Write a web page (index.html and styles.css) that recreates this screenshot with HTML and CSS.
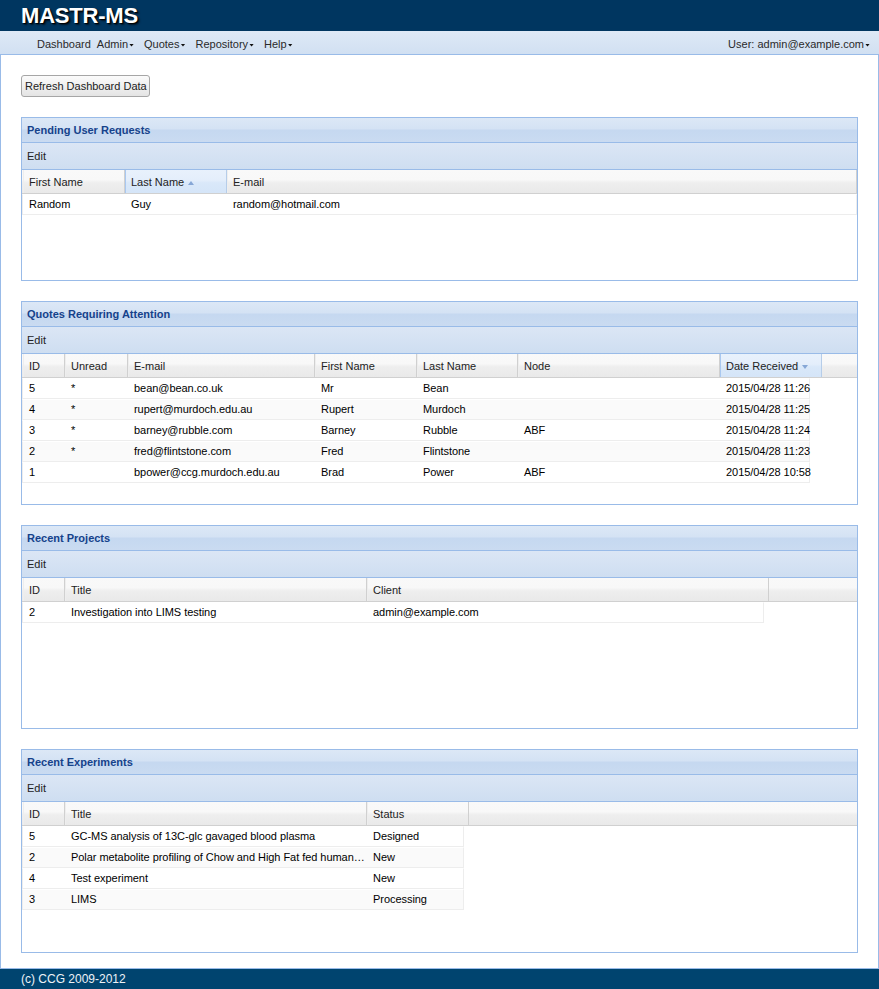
FILE: index.html
```html
<!DOCTYPE html>
<html lang="en">
<head>
<meta charset="utf-8">
<title>MASTR-MS</title>
<link rel="stylesheet" href="styles.css">
</head>
<body>
<header class="topbar"><span class="brand">MASTR-MS</span></header>
<nav class="menubar">
  <div class="menu-group">
    <span class="mi">Dashboard</span>
    <span class="mi">Admin<i class="caret"></i></span>
    <span class="mi">Quotes<i class="caret"></i></span>
    <span class="mi">Repository<i class="caret"></i></span>
    <span class="mi">Help<i class="caret"></i></span>
  </div>
  <div class="menu-group">
    <span class="mi">User: admin@example.com<i class="caret"></i></span>
  </div>
</nav>
<main class="content">
  <button class="btn" type="button">Refresh Dashboard Data</button>

  <section class="panel panel-short">
    <div class="panel-head">Pending User Requests</div>
    <div class="toolbar"><span class="tb-btn">Edit</span></div>
    <div class="grid g-pending">
      <div class="grid-head">
        <div class="hd">First Name</div>
        <div class="hd sorted">Last Name<i class="arrow-up"></i></div>
        <div class="hd">E-mail</div>
      </div>
      <div class="grid-body">
        <div class="row"><div class="cell">Random</div><div class="cell">Guy</div><div class="cell">random@hotmail.com</div></div>
      </div>
    </div>
  </section>

  <section class="panel">
    <div class="panel-head">Quotes Requiring Attention</div>
    <div class="toolbar"><span class="tb-btn">Edit</span></div>
    <div class="grid g-quotes">
      <div class="grid-head">
        <div class="hd">ID</div>
        <div class="hd">Unread</div>
        <div class="hd">E-mail</div>
        <div class="hd">First Name</div>
        <div class="hd">Last Name</div>
        <div class="hd">Node</div>
        <div class="hd sorted">Date Received<i class="arrow-down"></i></div>
        <div class="hd-fill"></div>
      </div>
      <div class="grid-body">
        <div class="row"><div class="cell">5</div><div class="cell">*</div><div class="cell">bean@bean.co.uk</div><div class="cell">Mr</div><div class="cell">Bean</div><div class="cell"></div><div class="cell">2015/04/28 11:26</div></div>
        <div class="row alt"><div class="cell">4</div><div class="cell">*</div><div class="cell">rupert@murdoch.edu.au</div><div class="cell">Rupert</div><div class="cell">Murdoch</div><div class="cell"></div><div class="cell">2015/04/28 11:25</div></div>
        <div class="row"><div class="cell">3</div><div class="cell">*</div><div class="cell">barney@rubble.com</div><div class="cell">Barney</div><div class="cell">Rubble</div><div class="cell">ABF</div><div class="cell">2015/04/28 11:24</div></div>
        <div class="row alt"><div class="cell">2</div><div class="cell">*</div><div class="cell">fred@flintstone.com</div><div class="cell">Fred</div><div class="cell">Flintstone</div><div class="cell"></div><div class="cell">2015/04/28 11:23</div></div>
        <div class="row"><div class="cell">1</div><div class="cell"></div><div class="cell">bpower@ccg.murdoch.edu.au</div><div class="cell">Brad</div><div class="cell">Power</div><div class="cell">ABF</div><div class="cell">2015/04/28 10:58</div></div>
      </div>
    </div>
  </section>

  <section class="panel">
    <div class="panel-head">Recent Projects</div>
    <div class="toolbar"><span class="tb-btn">Edit</span></div>
    <div class="grid g-projects">
      <div class="grid-head">
        <div class="hd">ID</div>
        <div class="hd">Title</div>
        <div class="hd">Client</div>
        <div class="hd-fill"></div>
      </div>
      <div class="grid-body">
        <div class="row"><div class="cell">2</div><div class="cell">Investigation into LIMS testing</div><div class="cell">admin@example.com</div></div>
      </div>
    </div>
  </section>

  <section class="panel">
    <div class="panel-head">Recent Experiments</div>
    <div class="toolbar"><span class="tb-btn">Edit</span></div>
    <div class="grid g-exps">
      <div class="grid-head">
        <div class="hd">ID</div>
        <div class="hd">Title</div>
        <div class="hd">Status</div>
        <div class="hd-fill"></div>
      </div>
      <div class="grid-body">
        <div class="row"><div class="cell">5</div><div class="cell">GC-MS analysis of 13C-glc gavaged blood plasma</div><div class="cell">Designed</div></div>
        <div class="row alt"><div class="cell">2</div><div class="cell">Polar metabolite profiling of Chow and High Fat fed human plasma</div><div class="cell">New</div></div>
        <div class="row"><div class="cell">4</div><div class="cell">Test experiment</div><div class="cell">New</div></div>
        <div class="row alt"><div class="cell">3</div><div class="cell">LIMS</div><div class="cell">Processing</div></div>
      </div>
    </div>
  </section>
</main>
<footer class="footer">(c) CCG 2009-2012</footer>
</body>
</html>
```
FILE: styles.css
```css
* { box-sizing: border-box; }

html, body { height: 100%; }

body {
  margin: 0;
  display: flex;
  flex-direction: column;
  height: 100vh;
  font-family: "Liberation Sans", Arial, sans-serif;
  font-size: 11px;
  color: #000;
  background: #fff;
  overflow: hidden;
}

/* ---------- top bar ---------- */
.topbar {
  flex: 0 0 31px;
  height: 31px;
  background: #003660;
  padding: 1px 0 0 21px;
  display: flex;
  align-items: center;
}

.brand {
  color: #fff;
  font-weight: bold;
  font-size: 22px;
  line-height: 1;
  letter-spacing: -0.2px;
  text-shadow: 1px 1px 1px #000, 2px 2px 2px rgba(0, 0, 0, 0.6);
}

/* ---------- menu bar ---------- */
.menubar {
  flex: 0 0 24px;
  height: 24px;
  border-bottom: 1px solid #99bbe8;
  background: linear-gradient(#dee9f6, #d1e0f2);
  display: flex;
  justify-content: space-between;
  align-items: flex-start;
  padding: 7px 2px 0 34px;
}

.menu-group {
  display: flex;
  align-items: center;
}

.mi {
  display: flex;
  align-items: center;
  padding: 0 3px;
  line-height: 13px;
  color: #2a2a2a;
  white-space: nowrap;
}

.caret {
  display: inline-block;
  width: 5px;
  height: 3px;
  margin: 1px 4px 0 1px;
  background: #111;
  clip-path: polygon(0 0, 100% 0, 50% 100%);
}

/* ---------- content ---------- */
.content {
  flex: 1 1 auto;
  border: 1px solid #99bbe8;
  border-top: none;
  padding: 20px 20px 0 20px;
  overflow: hidden;
}

.btn {
  display: block;
  height: 22px;
  margin: 0;
  padding: 0 2px 0 3px;
  border: 1px solid #a6a6a6;
  border-radius: 3px;
  background: linear-gradient(#fbfbfb, #e4e4e4);
  font-family: "Liberation Sans", Arial, sans-serif;
  font-size: 11px;
  line-height: 20px;
  color: #222;
}

/* ---------- panels ---------- */
.panel {
  height: 204px;
  margin-top: 20px;
  border: 1px solid #99bbe8;
  display: flex;
  flex-direction: column;
  background: #fff;
}

.panel-short { height: 164px; }

.panel-head {
  flex: 0 0 25px;
  height: 25px;
  border-bottom: 1px solid #99bbe8;
  padding-left: 5px;
  line-height: 24px;
  font-weight: bold;
  color: #15428b;
  background: linear-gradient(#dce8f6 0, #d4e2f4 46%, #c5d8f0 50%, #cadbf1 100%);
}

.toolbar {
  flex: 0 0 27px;
  height: 27px;
  border-bottom: 1px solid #99bbe8;
  padding-left: 5px;
  line-height: 26px;
  background: linear-gradient(#dbe6f5, #cedef1);
}

.tb-btn { color: #222; }

/* ---------- grids ---------- */
.grid {
  flex: 1 1 auto;
  display: flex;
  flex-direction: column;
  min-height: 0;
}

.grid-head {
  flex: 0 0 24px;
  height: 24px;
  display: grid;
  padding-left: 1px;
  border-bottom: 1px solid #d0d0d0;
  background: linear-gradient(#f9f9f9 0, #f8f8f8 42%, #eeeeee 56%, #e9e9e9 100%);
}

.hd {
  height: 23px;
  padding-top: 1px;
  line-height: 22px;
  padding-left: 5px;
  border-left: 1px solid #eeeeee;
  border-right: 1px solid #d0d0d0;
  color: #222;
  white-space: nowrap;
  overflow: hidden;
}

.hd.sorted {
  border-left-color: #a9c8f0;
  border-right-color: #b6cde9;
  background: linear-gradient(#e8f1fc 0, #e4eefb 44%, #d9e8f9 56%, #d5e5f8 100%);
}

.hd-fill { height: 23px; }

.arrow-up,
.arrow-down {
  display: inline-block;
  width: 0;
  height: 0;
  margin-left: 4px;
  vertical-align: 1px;
  border-left: 3.5px solid transparent;
  border-right: 3.5px solid transparent;
}

.arrow-up { border-bottom: 4px solid #86a7d6; }
.arrow-down { border-top: 4px solid #86a7d6; }

.grid-body {
  flex: 1 1 auto;
  background: #fff;
  overflow: hidden;
}

.row {
  display: grid;
  height: 21px;
  border: 1px solid #ededed;
  border-top-color: #fff;
  background: #fff;
  overflow: hidden;
}

.row.alt { background: #fafafa; }

.cell {
  padding-left: 6px;
  padding-right: 0;
  line-height: 19px;
  letter-spacing: -0.05px;
  white-space: nowrap;
  overflow: hidden;
  text-overflow: ellipsis;
  color: #000;
}

/* column layouts */
.g-pending .grid-head { grid-template-columns: 102px 102px 1fr; }
.g-pending .row { grid-template-columns: 102px 102px 1fr; }

.g-quotes .grid-head { grid-template-columns: 42px 63px 187px 102px 101px 202px 102px 1fr; }
.g-quotes .row { width: 788px; overflow: visible; grid-template-columns: 42px 63px 187px 102px 101px 202px 102px; }

.g-projects .grid-head { grid-template-columns: 42px 302px 402px 1fr; }
.g-projects .row { width: 742px; grid-template-columns: 42px 302px 402px; }

.g-exps .grid-head { grid-template-columns: 42px 302px 102px 1fr; }
.g-exps .row { width: 442px; grid-template-columns: 42px 302px 102px; }

/* ---------- footer ---------- */
.footer {
  flex: 0 0 20px;
  height: 20px;
  background: #00446f;
  color: #eef2f7;
  font-size: 12px;
  line-height: 20px;
  padding-left: 21px;
}
```
